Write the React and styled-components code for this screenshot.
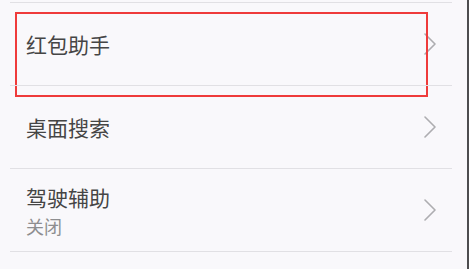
import React from "react";
import styled, { createGlobalStyle } from "styled-components";

const GlobalStyle = createGlobalStyle`
  html, body {
    margin: 0;
    padding: 0;
    background: #f9f8fb;
  }
  body {
    font-family: "Noto Sans CJK SC", "Noto Sans", sans-serif;
  }
`;

const items = [
  { title: "红包助手", highlight: true },
  { title: "桌面搜索" },
  { title: "驾驶辅助", sub: "关闭" },
];

const Chevron = () => (
  <svg width="12" height="22" viewBox="0 0 12 22">
    <polyline
      points="1,1 11,11 1,21"
      fill="none"
      stroke="#adadb0"
      strokeWidth="1.6"
      strokeLinejoin="round"
      strokeLinecap="round"
    />
  </svg>
);

const App = () => {
  return (
    <>
      <GlobalStyle />
      <Screen>
        <List>
          {items.map((item) => (
            <Row key={item.title}>
              <Texts>
                <Title>{item.title}</Title>
                {item.sub && <Sub>{item.sub}</Sub>}
              </Texts>
              <Chevron />
              {item.highlight && <Highlight />}
            </Row>
          ))}
        </List>
        <Edge />
      </Screen>
    </>
  );
};

export default App;

const Screen = styled.div`
  display: flex;
  width: 469px;
  height: 269px;
  overflow: hidden;
  background: #f9f8fb;
`;

const List = styled.div`
  flex: 1;
  padding: 2px 15px 0 10px;
  display: flex;
  flex-direction: column;
`;

const Row = styled.div`
  position: relative;
  display: flex;
  align-items: center;
  justify-content: space-between;
  height: 82px;
  padding: 0 16px;
  border-top: 1px solid #e1e0e4;
  &:last-child {
    border-bottom: 1px solid #e1e0e4;
  }
`;

const Texts = styled.div`
  display: flex;
  flex-direction: column;
  gap: 5px;
`;

const Title = styled.div`
  font-size: 21px;
  line-height: 26px;
  color: #454545;
`;

const Sub = styled.div`
  font-size: 18px;
  line-height: 22px;
  color: #8e8e90;
`;

const Highlight = styled.div`
  position: absolute;
  left: 5px;
  top: 9px;
  width: 413px;
  height: 85px;
  box-sizing: border-box;
  border: 2px solid #ef3b3b;
  pointer-events: none;
`;

const Edge = styled.div`
  width: 2px;
  background: #4d4d4f;
`;
